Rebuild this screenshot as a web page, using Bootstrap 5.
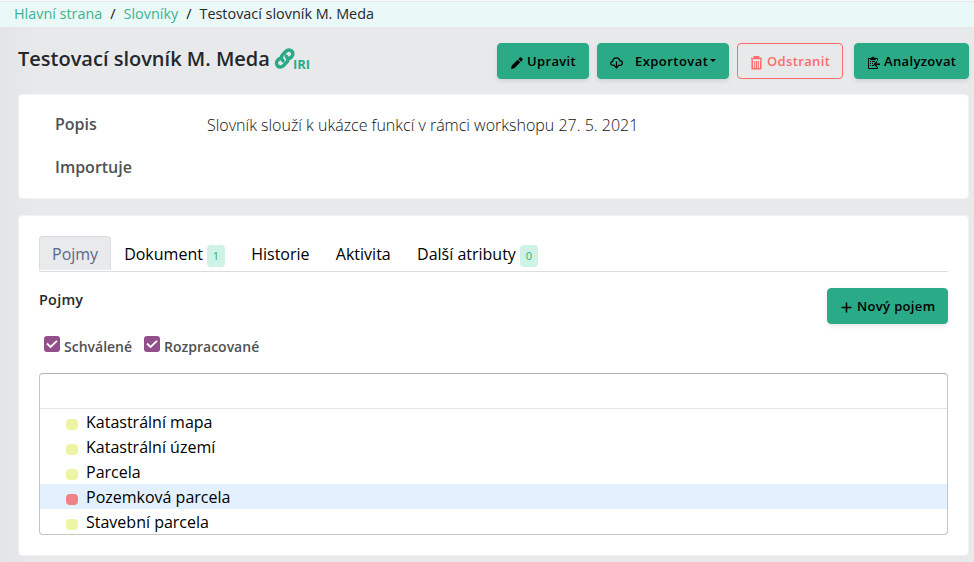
<!DOCTYPE html>
<html lang="cs">
<head>
<meta charset="utf-8">
<meta name="viewport" content="width=device-width, initial-scale=1">
<title>Testovací slovník M. Meda</title>
<link href="https://cdn.jsdelivr.net/npm/bootstrap@5.3.0/dist/css/bootstrap.min.css" rel="stylesheet">
<style>
:root{--green:#2aaa86}
body{font-family:"Open Sans","Noto Sans",sans-serif;font-size:16px;line-height:24px;color:#000;height:562px;overflow:hidden;background:linear-gradient(90deg,#e2e4e8 0,#e8e9eb 36px) #e8e9eb}
.crumbs{--bs-breadcrumb-font-size:14.4px;height:27px;border-top:1px solid #f8f8f8;box-shadow:inset 0 1px #dcecec;background:#ebf8f8;padding:1px 0 0 14px;line-height:24px}
.crumbs a{color:#3db393;text-decoration:none}
.crumbs .breadcrumb-item+.breadcrumb-item::before{color:#111;padding-right:8px}
.crumbs .active{color:#23282c}
.headline{height:67px;padding:16px 5px 0 18px}
.headline h1{font-size:20px;line-height:24px;font-weight:600;color:#23282c;padding-top:4px}
.iri{color:var(--green);font-size:13px;font-weight:700;line-height:16px}
.act{--bs-btn-font-size:13px;--bs-btn-font-weight:600;--bs-btn-padding-x:0;--bs-btn-padding-y:0;--bs-btn-border-radius:4px;height:36px;letter-spacing:.35px;white-space:nowrap;display:flex;align-items:center;line-height:20px}
.act-green{--bs-btn-bg:var(--green);--bs-btn-color:#000;--bs-btn-border-color:var(--green);box-shadow:0 2px 4px rgba(0,0,0,.1)}
.act-red{--bs-btn-color:#ff6b6b;--bs-btn-border-color:#ff6b6b}
.act svg{margin-top:3px}
.w-up{width:92px;padding-left:13px}.w-ex{width:132px;padding-left:12px;letter-spacing:.45px}.w-od{width:106px;padding-left:12px}.w-an{width:115px;padding-left:12px}
.w-new{width:121px;padding-left:13px}
.caret{border:3px solid transparent;border-top-color:#000;border-bottom:0;margin:-1px 0 0 2px}
.panel{background:#fff;border:1px solid #f2f2f3;border-radius:4px;margin:0 5px 0 18px}
.panel-meta{height:105px;padding:17px 36px}
.panel-terms{height:341px;margin-top:16px;padding:20px 20px 0}
.term-label{width:152px;font-weight:600;color:#4f5153}
.term-text{font-weight:300;color:#111;padding-top:1px}
.tabs{--bs-nav-tabs-border-color:#dcdde0;--bs-nav-tabs-border-width:1px;height:36px}
.tabs .nav-link{padding:5px 12px 4px;height:34px;line-height:24px;color:#000;border-radius:4px 4px 0 0;border:1px solid transparent;margin:0;display:flex}
.tabs .nav-item:nth-child(n+3){margin-left:.3px}
.tabs .nav-link.active{background:#e9eaeb;color:#5c6788;border-color:#d9dce1 #d9dce1 transparent}
.count{width:18px;height:22px;border-radius:4px;background:#cff2e7;color:#1db283;font-size:11px;font-weight:500;line-height:22px;text-align:center;margin:3px 0 0 4px}
.section-title{font-size:14.4px;font-weight:600;color:#23282c;line-height:20px;margin:18px 0 0;letter-spacing:.25px}
.filters{height:16px;margin-top:12px;padding-left:5px;font-size:14px;font-weight:600;color:#4f5153}
.tick{width:16px;height:16px;border-radius:3px;background:#924f8c;display:block}
.filters span{line-height:20px;padding-top:1px;margin-left:4px}
.tree{height:162px;margin-top:21px;border:1px solid #c5c5c5;border-top-color:#b3b3b3;border-radius:4px;overflow:hidden}
.tree-search{height:35px;border-bottom:1px solid #e3e3e3}
.tree-row{height:25px;line-height:23px;padding:2px 0 0 26px}
.tree-row i{width:12px;height:11px;border-radius:4px;background:#edf5a4;margin:4px 8px 0 0}
.tree-row.picked{background:#e3f1fe}.tree-row.picked i{background:#ee8287}
</style>
<script src="https://cdn.jsdelivr.net/npm/bootstrap@5.3.0/dist/js/bootstrap.bundle.min.js"></script>
</head>
<body>
<nav aria-label="breadcrumb"><ol class="breadcrumb crumbs mb-0">
<li class="breadcrumb-item"><a href="#">Hlavní strana</a></li><li class="breadcrumb-item"><a href="#">Slovníky</a></li><li class="breadcrumb-item active">Testovací slovník M. Meda</li>
</ol></nav>
<header class="headline d-flex align-items-start justify-content-between">
<div class="d-flex"><h1 class="mb-0">Testovací slovník M. Meda</h1>
<a class="iri d-flex text-decoration-none ms-1" href="#"><svg style="margin-top:3px" width="22" height="25" viewBox="0 0 22 24" fill="none" stroke="currentColor" stroke-width="3.5" stroke-linecap="round"><path d="M9 14.300c-2-2-2-4.500-.4-6.100l3.400-3.400c1.700-1.700 4.200-1.600 5.700-.2s1.600 3.900-.1 5.600l-1.600 1.600M12.300 9.700c2 2 2 4.500.4 6.100l-3.400 3.400c-1.700 1.700-4.200 1.600-5.700.2s-1.600-3.900.1-5.600l1.600-1.600"/></svg><span style="padding-top:13px;margin-left:-3px">IRI</span></a></div>
<div class="d-flex">
<button class="btn act act-green w-up"><svg width="12" height="12" viewBox="0 0 12 12"><path d="M0 12l.8-3.400L6.700 2.700l2.600 2.600-5.900 5.900zM7.300 2.100l1.500-1.500q.7-.6 1.400 0l1.200 1.200q.6.700 0 1.400L9.900 4.700z"/></svg><span class="ms-1">Upravit</span></button>
<button class="btn act act-green w-ex ms-2"><svg width="13" height="12" viewBox="0 0 13 12" fill="none" stroke="#000" stroke-width="1.200"><path d="M5 8.300H3C1.300 8.300.7 7.300.7 6.300s.8-1.900 2-2C2.900 2.200 4.300.8 6.300.8s3.200 1.200 3.500 2.900c1.500.1 2.500 1 2.500 2.300s-.9 2.300-2.300 2.300H8M6.500 4.500v6M4.700 9l1.800 1.900L8.300 9"/></svg><span style="margin-left:12px">Exportovat</span><i class="caret"></i></button>
<button class="btn act act-red w-od ms-2"><svg width="13" height="14" viewBox="0 0 13 14" fill="none" stroke="currentColor"><path d="M1 2.500h11M4.500 2V.8h4V2" stroke-width="1.700"/><path d="M2.200 3.500v9.300h8.600V3.500" stroke-width="1.500"/><path d="M4.700 5v7M6.500 5v7M8.300 5v7"/></svg><span style="margin-left:4px">Odstranit</span></button>
<button class="btn act act-green w-an" style="margin-left:11px"><svg width="13" height="13" viewBox="0 0 13 13" fill="none" stroke="#000" stroke-width="1"><path d="M10.500 4.500v-2h-9v10h9v-1.500"/><path d="M3.700 3.500v-1.500h1Q6-.4 7.300 2h1v1.500z"/><path d="M3 5.500h1M5 5.500h3M3 7.500h1M5 7.500h1M3 9.500h1M5 9.500h2"/><path d="M13 8.200H8M9.900 5.700L7.500 8.200l2.400 2.500" stroke-width="1.500"/></svg><span class="ms-1">Analyzovat</span></button>
</div>
</header>
<main>
<section class="panel panel-meta">
<div class="d-flex"><div class="term-label">Popis</div><div class="term-text">Slovník slouží k ukázce funkcí v rámci workshopu 27. 5. 2021</div></div>
<div class="term-label" style="margin-top:18px">Importuje</div>
</section>
<section class="panel panel-terms">
<ul class="nav nav-tabs tabs flex-nowrap">
<li class="nav-item"><a class="nav-link active" href="#">Pojmy</a></li>
<li class="nav-item"><a class="nav-link" href="#">Dokument<span class="count">1</span></a></li>
<li class="nav-item"><a class="nav-link" href="#">Historie</a></li>
<li class="nav-item"><a class="nav-link" href="#">Aktivita</a></li>
<li class="nav-item"><a class="nav-link" href="#">Další atributy<span class="count">0</span></a></li>
</ul>
<div class="d-flex justify-content-between" style="height:52px"><h2 class="section-title">Pojmy</h2>
<button class="btn act act-green w-new" style="margin-top:16px"><svg width="11" height="11" viewBox="0 0 11 11"><path d="M5.500.5v10M.5 5.500h10" stroke="#000" stroke-width="1.500"/></svg><span style="margin-left:5px">Nový pojem</span></button></div>
<div class="filters d-flex"><i class="tick"><svg class="d-block" width="16" height="16" viewBox="0 0 16 16" fill="none" stroke="#fff" stroke-width="1.800"><path d="M3 7.500l3.500 3.500L13 4.800"/></svg></i><span>Schválené</span>
<i class="tick" style="margin-left:12px"><svg class="d-block" width="16" height="16" viewBox="0 0 16 16" fill="none" stroke="#fff" stroke-width="1.800"><path d="M3 7.500l3.500 3.500L13 4.800"/></svg></i><span>Rozpracované</span></div>
<div class="tree"><div class="tree-search"></div>
<div class="tree-row d-flex align-items-center"><i></i>Katastrální mapa</div>
<div class="tree-row d-flex align-items-center"><i></i>Katastrální území</div>
<div class="tree-row d-flex align-items-center"><i></i>Parcela</div>
<div class="tree-row d-flex align-items-center picked"><i></i>Pozemková parcela</div>
<div class="tree-row d-flex align-items-center"><i></i>Stavební parcela</div>
</div>
</section>
</main>
</body>
</html>
